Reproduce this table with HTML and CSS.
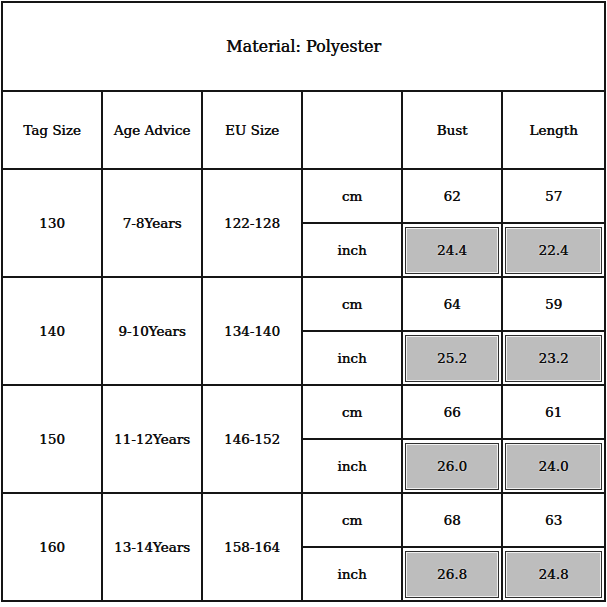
FILE: index.html
```html
<!DOCTYPE html>
<html>
<head>
<meta charset="utf-8">
<link rel="stylesheet" href="styles.css">
</head>
<body>
<table class="size-table">
  <colgroup>
    <col class="c"><col class="c"><col class="c"><col class="c"><col class="c"><col class="c-last">
  </colgroup>
  <tr class="r-title"><td colspan="6" class="title">Material: Polyester</td></tr>
  <tr class="r-head">
    <td>Tag Size</td><td>Age Advice</td><td>EU Size</td><td></td><td>Bust</td><td>Length</td>
  </tr>
  <tr class="r-sub"><td rowspan="2">130</td><td rowspan="2">7-8Years</td><td rowspan="2">122-128</td><td>cm</td><td>62</td><td>57</td></tr>
  <tr class="r-sub"><td>inch</td><td class="g"><div class="gbox">24.4</div></td><td class="g"><div class="gbox">22.4</div></td></tr>
  <tr class="r-sub"><td rowspan="2">140</td><td rowspan="2">9-10Years</td><td rowspan="2">134-140</td><td>cm</td><td>64</td><td>59</td></tr>
  <tr class="r-sub"><td>inch</td><td class="g"><div class="gbox">25.2</div></td><td class="g"><div class="gbox">23.2</div></td></tr>
  <tr class="r-sub"><td rowspan="2">150</td><td rowspan="2">11-12Years</td><td rowspan="2">146-152</td><td>cm</td><td>66</td><td>61</td></tr>
  <tr class="r-sub"><td>inch</td><td class="g"><div class="gbox">26.0</div></td><td class="g"><div class="gbox">24.0</div></td></tr>
  <tr class="r-sub"><td rowspan="2">160</td><td rowspan="2">13-14Years</td><td rowspan="2">158-164</td><td>cm</td><td>68</td><td>63</td></tr>
  <tr class="r-sub"><td>inch</td><td class="g"><div class="gbox">26.8</div></td><td class="g"><div class="gbox">24.8</div></td></tr>
</table>
</body>
</html>
```
FILE: styles.css
```css
html, body {
  margin: 0;
  padding: 0;
  background: #ffffff;
}
.size-table {
  border-collapse: collapse;
  table-layout: fixed;
  width: 603px;
  margin: 1px 0 0 1px;
  font-family: "DejaVu Serif", "Liberation Serif", serif;
  font-size: 13.5px;
  font-weight: normal;
  color: #0d0d0d;
}
.c { width: 100px; }
.c-last { width: 103px; }
.size-table td {
  border: 2px solid #151515;
  text-align: center;
  vertical-align: middle;
  padding: 0;
  box-sizing: border-box;
  font-family: "DejaVu Serif", "Liberation Serif", serif;
  text-shadow: 0.4px 0 0 #0d0d0d;
}
.r-title td { height: 89px; }
.r-head td { height: 78px; }
.r-sub td { height: 54px; }
.title {
  font-size: 16px;
}
.g {
  padding: 2px !important;
}
.gbox {
  box-sizing: border-box;
  height: 47px;
  display: flex;
  align-items: center;
  justify-content: center;
  background: #bdbdbd;
  border: 1px solid #2e2e2e;
  box-shadow: inset 0 0 0 1px #f0f0f0;
  font-family: "DejaVu Serif", "Liberation Serif", serif;
  text-shadow: 0.4px 0 0 #0d0d0d, 0 0 2px #ffffff;
}
```
